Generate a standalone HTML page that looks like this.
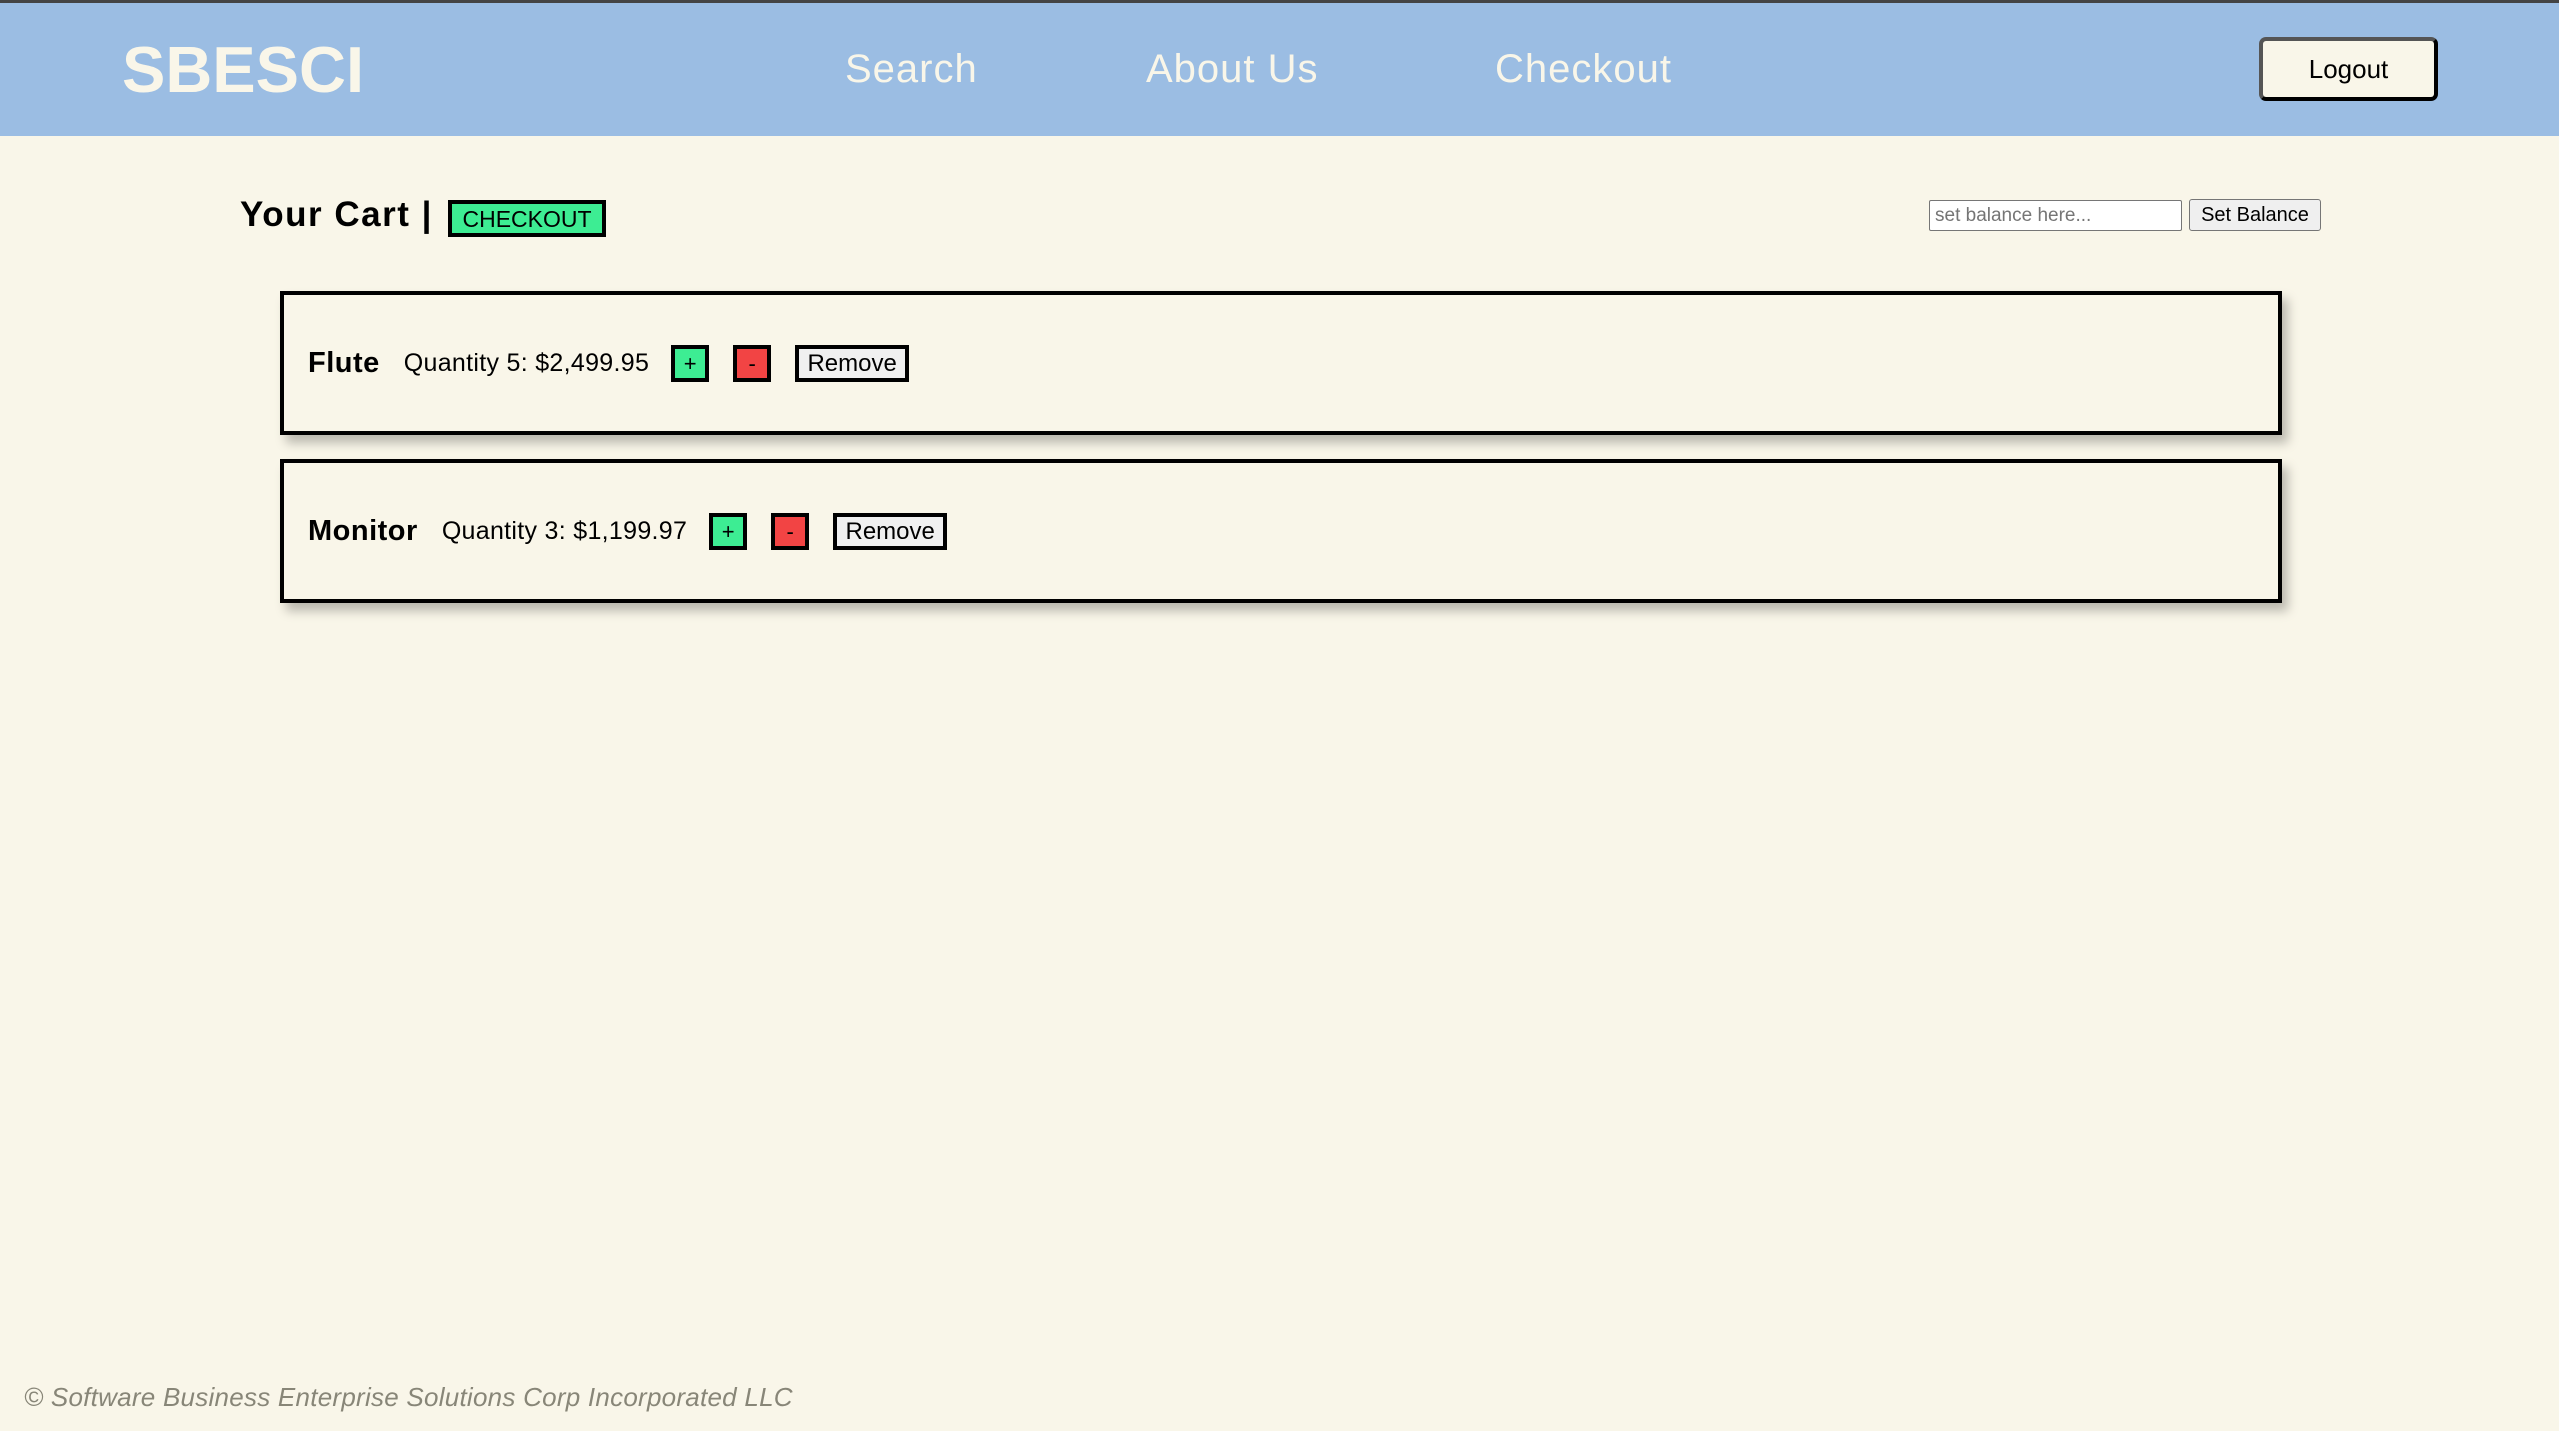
<!DOCTYPE html>
<html><head><meta charset="utf-8"><style>
*{box-sizing:border-box;margin:0;padding:0}
body{width:2559px;height:1431px;background:#f9f6e9;font-family:"Liberation Sans",sans-serif;position:relative;overflow:hidden}
.top{position:absolute;left:0;top:0;width:2559px;height:3px;background:#444}
.hdr{position:absolute;left:0;top:3px;width:2559px;height:133px;background:#9bbde3}
.logo{position:absolute;left:122px;top:29px;font-size:65px;font-weight:bold;color:#f9f6e9;letter-spacing:0px}
.nav{position:absolute;top:44px;font-size:40px;color:#f9f6e9;letter-spacing:1px}
.logout{position:absolute;left:2259px;top:34px;width:179px;height:64px;background:#f9f6e9;border:4px solid #000;border-top-color:#555;border-left-color:#555;border-radius:7px;font-size:26px;text-align:center;line-height:56px}
.title{position:absolute;left:240px;top:195px;font-size:35px;font-weight:bold;letter-spacing:1.5px}
.co{position:absolute;left:448px;top:200px;width:158px;height:37px;background:#3ded93;border:4px solid #000;font-size:23px;text-align:center;line-height:30px}
.inp{position:absolute;left:1929px;top:200px;width:253px;height:31px;background:#fff;border:1px solid #767676;border-radius:2px;font-size:19px;color:#757575;padding-left:5px;line-height:29px}
.sb{position:absolute;left:2189px;top:199px;width:132px;height:32px;background:#efefef;border:1px solid #767676;border-radius:3px;font-size:20px;text-align:center;line-height:30px}
.card{position:absolute;left:280px;width:2002px;height:144px;border:4px solid #000;box-shadow:6px 8px 10px rgba(0,0,0,.25);background:#f9f6e9}
.row{position:absolute;left:24px;top:50px;height:37px;display:flex;align-items:center}
.nm{font-size:29px;font-weight:bold;letter-spacing:0.5px}
.q{font-size:25px;margin-left:24px;letter-spacing:0.3px}
.b{height:37px;border:4px solid #000;font-size:22px;text-align:center;line-height:29px}
.p{width:38px;background:#3ded93;margin-left:22px}
.m{width:38px;background:#f24444;margin-left:24px}
.r{width:114px;background:#f0f0f0;margin-left:24px;font-size:24px}
.ft{position:absolute;left:24px;top:1382px;font-size:26px;font-style:italic;color:#888678;letter-spacing:0.25px}
</style></head><body>
<div class="top"></div>
<div class="hdr">
<div class="logo">SBESCI</div>
<div class="nav" style="left:845px">Search</div>
<div class="nav" style="left:1146px">About Us</div>
<div class="nav" style="left:1495px">Checkout</div>
<div class="logout">Logout</div>
</div>
<div class="title">Your Cart |</div>
<div class="co">CHECKOUT</div>
<div class="inp">set balance here...</div>
<div class="sb">Set Balance</div>
<div class="card" style="top:291px"><div class="row"><span class="nm">Flute</span><span class="q">Quantity 5: $2,499.95</span><div class="b p">+</div><div class="b m">-</div><div class="b r">Remove</div></div></div>
<div class="card" style="top:459px"><div class="row"><span class="nm">Monitor</span><span class="q">Quantity 3: $1,199.97</span><div class="b p">+</div><div class="b m">-</div><div class="b r">Remove</div></div></div>
<div class="ft">© Software Business Enterprise Solutions Corp Incorporated LLC</div>
</body></html>
